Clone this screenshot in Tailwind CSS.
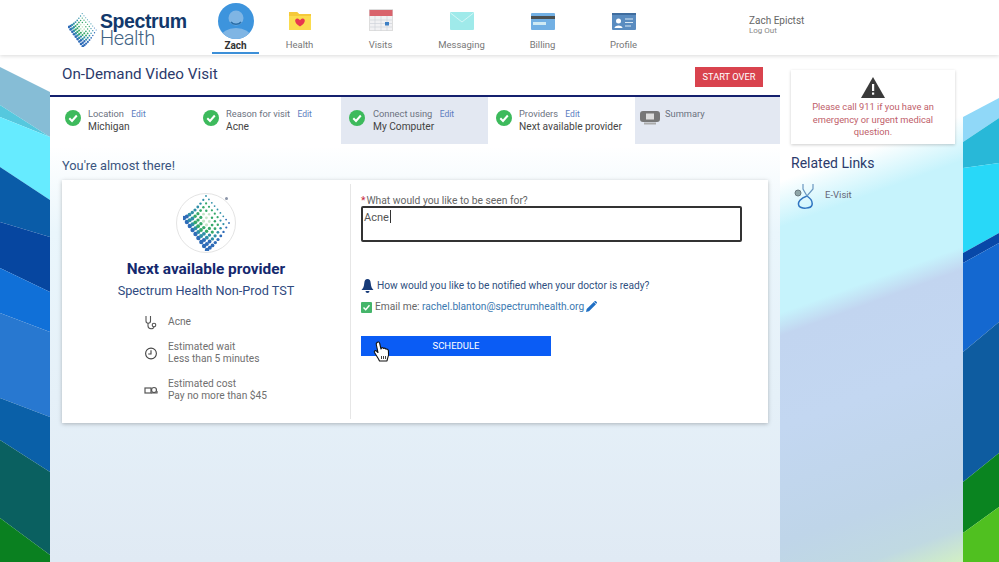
<!DOCTYPE html>
<html lang="en">
<head>
    <meta charset="UTF-8">
    <title>On-Demand Video Visit</title>
    <script src="https://cdn.jsdelivr.net/npm/@tailwindcss/browser@4"></script>
</head>
<body class="relative h-[562px] w-[999px] overflow-hidden bg-white font-['Roboto',sans-serif]">

<!-- Header -->
<header class="relative z-10 flex h-[55px] bg-white shadow-[0_1px_4px_rgba(0,0,0,0.15)]">
    <div class="flex w-[212px] shrink-0 items-start pl-[68px] pt-[12px]">
        <svg data-mesh="1" class="mt-px h-[34px] w-[29px]" viewBox="0 0 47 56"></svg>
        <div class="ml-[3px] mt-0">
            <div class="h-[18px] whitespace-nowrap font-['Liberation_Sans',sans-serif] text-[19.5px] font-bold leading-[18px] tracking-[-0.4px] text-[#12386b]">Spectrum</div>
            <div class="h-[17px] whitespace-nowrap text-[20px] font-light leading-[17px] tracking-[-0.4px] text-[#3f6283]">Health</div>
        </div>
    </div>
    <nav class="flex text-center text-[9.5px] text-[#777]">
        <a href="#" class="relative flex h-[55px] w-[47px] flex-col items-center pt-[3px]">
            <svg class="h-[36px] w-[36px] shrink-0" viewBox="0 0 36 36">
                <circle cx="18" cy="18" r="18" fill="#3d94dd"/>
                <clipPath id="av"><circle cx="18" cy="18" r="18"/></clipPath>
                <g clip-path="url(#av)">
                    <ellipse cx="18" cy="34" rx="15" ry="9" fill="#7fb5e4"/>
                    <circle cx="18" cy="15" r="7.5" fill="#7fb5e4"/>
                    <path d="M13 19c2 3 8 3 10 0" fill="none" stroke="#2a6ea8" stroke-width="1.6"/>
                </g>
            </svg>
            <span class="mt-[1px] whitespace-nowrap text-[10px] font-bold leading-[12px] text-[#333]">Zach</span>
            <span class="absolute bottom-[1px] left-0 h-[2px] w-[47px] bg-[#3c8fd8]"></span>
        </a>
        <a href="#" class="flex w-[81px] flex-col items-center pt-[11px]">
            <svg class="h-[20px] w-[24px]" viewBox="0 0 24 20">
                <path d="M1 1h8l2 2h12v16H1z" fill="#fbdc4e"/>
                <path d="M1 1h8l2 2h12v2H1z" fill="#f5c93a"/>
                <path d="M12 15.5c-7-4-5-8.500-2.500-8 1.200.2 2 1 2.500 1.800.5-.8 1.300-1.600 2.500-1.800 2.500-.5 4.500 4-2.500 8z" fill="#e8384f"/>
            </svg>
            <span class="mt-[8px] leading-[12px]">Health</span>
        </a>
        <a href="#" class="flex w-[81px] flex-col items-center pt-[9px]">
            <svg class="h-[22px] w-[24px]" viewBox="0 0 24 22">
                <rect x="0.500" y="0.500" width="23" height="21" fill="#f1f1f3" stroke="#ddd"/>
                <rect x="0.500" y="1" width="23" height="6" fill="#d9636c"/>
                <path d="M1 11h22M1 14.500h22M1 18h22M6 7v15M12 7v15M18 7v15" stroke="#cfd3da" stroke-width="0.700"/>
                <rect x="16" y="13" width="4" height="3.500" fill="#3d7fc4"/>
            </svg>
            <span class="mt-[8px] leading-[12px]">Visits</span>
        </a>
        <a href="#" class="flex w-[81px] flex-col items-center pt-[12px]">
            <svg class="h-[18px] w-[24px]" viewBox="0 0 24 18">
                <rect width="24" height="18" rx="1" fill="#9feaea"/>
                <path d="M0.500 1 12 10 23.500 1" fill="none" stroke="#d4f6f6" stroke-width="1"/>
            </svg>
            <span class="mt-[9px] leading-[12px]">Messaging</span>
        </a>
        <a href="#" class="flex w-[81px] flex-col items-center pt-[13px]">
            <svg class="h-[17px] w-[24px]" viewBox="0 0 24 17">
                <rect width="24" height="17" rx="1" fill="#72b0e4"/>
                <rect y="3" width="24" height="3" fill="#4a4f50"/>
                <rect x="2" y="9" width="13" height="3" fill="#cfeaf4"/>
            </svg>
            <span class="mt-[9px] leading-[12px]">Billing</span>
        </a>
        <a href="#" class="flex w-[81px] flex-col items-center pt-[13px]">
            <svg class="h-[17px] w-[24px]" viewBox="0 0 24 17">
                <rect width="24" height="17" rx="1" fill="#5a8cc0"/>
                <rect y="0" width="24" height="2" fill="#3f6d9f"/>
                <circle cx="6.500" cy="8" r="2.500" fill="#fff"/>
                <path d="M2.500 15c0-3.500 8-3.500 8 0z" fill="#fff"/>
                <path d="M13 6h8M13 9.500h8M13 13h6" stroke="#d8e8f4" stroke-width="1.200"/>
            </svg>
            <span class="mt-[9px] leading-[12px]">Profile</span>
        </a>
    </nav>
    <div class="ml-[85px] pt-[15px] text-[#666]">
        <div class="whitespace-nowrap text-[10px] leading-[12px]">Zach Epictst</div>
        <a href="#" class="block text-[8px] leading-[8px] text-[#888]">Log Out</a>
    </div>
</header>

<div class="flex h-[507px]">
    <!-- Left stripes -->
    <svg class="w-[50px] shrink-0" viewBox="0 55 50 507">
        <path d="M0 67 50 92V137L0 105z" fill="#86bdd6"/>
        <path d="M0 105 50 137 0 117z" fill="#55c8de"/>
        <path d="M0 117 50 137V200L0 167z" fill="#66ebff"/>
        <path d="M0 167 50 200V237L0 222z" fill="#0a5ca8"/>
        <path d="M0 222 50 237V292L0 268z" fill="#0646a0"/>
        <path d="M0 268 50 292V332L0 313z" fill="#1070d8"/>
        <path d="M0 313 50 332V417L0 398z" fill="#2878d0"/>
        <path d="M0 398 50 417V472L0 440z" fill="#0a60a8"/>
        <path d="M0 440 50 472V555L0 518z" fill="#0a6060"/>
        <path d="M0 518 50 555V562H0z" fill="#0a8020"/>
    </svg>

    <!-- Centre column -->
    <main class="w-[730px] shrink-0 bg-linear-to-b from-white from-[18%] via-[#eaf6fc] via-[35%] to-[#e0eaf4]">
        <div class="flex h-[40px] items-start justify-between pl-[12px] pr-[17px] pt-[12px]">
            <h1 class="text-[15.2px] leading-[14px] text-[#2b3a6b]">On-Demand Video Visit</h1>
            <button class="h-[20px] w-[68px] bg-[#d9434e] text-[9.3px] text-white">START OVER</button>
        </div>
        <div class="h-[2px] bg-[#14206e]"></div>

        <!-- Steps -->
        <div class="grid h-[47px] grid-cols-[145px_146px_147px_147px_145px]">
            <div class="flex bg-white pl-[15px] pt-[13px]">
                <svg class="h-[16px] w-[16px] shrink-0" viewBox="0 0 16 16"><circle cx="8" cy="8" r="8" fill="#3dba5c"/><path d="M4.300 8.300 7 11l4.800-5.500" fill="none" stroke="#fff" stroke-width="2"/></svg>
                <div class="ml-[7px] mt-[-2px]">
                    <div class="text-[9.3px] leading-[12px] text-[#6b7280]">Location <a href="#" class="ml-[5px] text-[8.5px] text-[#5b7cc0]">Edit</a></div>
                    <div class="text-[10.2px] leading-[13px] text-[#444]">Michigan</div>
                </div>
            </div>
            <div class="flex bg-white pl-[8px] pt-[13px]">
                <svg class="h-[16px] w-[16px] shrink-0" viewBox="0 0 16 16"><circle cx="8" cy="8" r="8" fill="#3dba5c"/><path d="M4.300 8.300 7 11l4.800-5.500" fill="none" stroke="#fff" stroke-width="2"/></svg>
                <div class="ml-[7px] mt-[-2px]">
                    <div class="text-[9.3px] leading-[12px] text-[#6b7280]">Reason for visit <a href="#" class="ml-[5px] text-[8.5px] text-[#5b7cc0]">Edit</a></div>
                    <div class="text-[10.2px] leading-[13px] text-[#444]">Acne</div>
                </div>
            </div>
            <div class="flex bg-[#e3e8f2] pl-[8px] pt-[13px]">
                <svg class="h-[16px] w-[16px] shrink-0" viewBox="0 0 16 16"><circle cx="8" cy="8" r="8" fill="#3dba5c"/><path d="M4.300 8.300 7 11l4.800-5.500" fill="none" stroke="#fff" stroke-width="2"/></svg>
                <div class="ml-[8px] mt-[-2px]">
                    <div class="text-[9.3px] leading-[12px] text-[#6b7280]">Connect using <a href="#" class="ml-[5px] text-[8.5px] text-[#5b7cc0]">Edit</a></div>
                    <div class="text-[10.2px] leading-[13px] text-[#444]">My Computer</div>
                </div>
            </div>
            <div class="flex bg-white pl-[8px] pt-[13px]">
                <svg class="h-[16px] w-[16px] shrink-0" viewBox="0 0 16 16"><circle cx="8" cy="8" r="8" fill="#3dba5c"/><path d="M4.300 8.300 7 11l4.800-5.500" fill="none" stroke="#fff" stroke-width="2"/></svg>
                <div class="ml-[7px] mt-[-2px]">
                    <div class="text-[9.3px] leading-[12px] text-[#6b7280]">Providers <a href="#" class="ml-[5px] text-[8.5px] text-[#5b7cc0]">Edit</a></div>
                    <div class="whitespace-nowrap text-[10.2px] leading-[13px] text-[#444]">Next available provider</div>
                </div>
            </div>
            <div class="flex bg-[#e3e8f2] pl-[5px] pt-[13px]">
                <svg class="mt-[1px] h-[14px] w-[20px] shrink-0" viewBox="0 0 20 14">
                    <rect width="20" height="11" rx="3" fill="#777"/>
                    <rect x="6" y="2.500" width="8" height="6" fill="#ddd"/>
                    <rect x="4" y="11.500" width="12" height="2" fill="#aaa"/>
                </svg>
                <div class="ml-[5px] mt-[-2px] text-[9.3px] leading-[12px] text-[#6b7280]">Summary</div>
            </div>
        </div>

        <h2 class="ml-[12px] mt-[15px] text-[12.8px] leading-[14px] text-[#3a5580]">You're almost there!</h2>

        <!-- Card -->
        <div class="relative ml-[12px] mt-[7px] flex h-[243px] w-[706px] bg-white shadow-[0_1px_4px_rgba(0,0,0,0.25)]">
            <section class="flex w-[288px] shrink-0 flex-col items-center pt-[13px]">
                <div class="relative flex h-[60px] w-[60px] items-center justify-center rounded-full border border-[#e4e4e4]">
                    <svg data-mesh="1" class="h-[56px] w-[47px]" viewBox="0 0 47 56"></svg>
                    <span class="absolute right-[7px] top-[3px] h-[3px] w-[3px] rounded-full bg-[#8a94a8]"></span>
                </div>
                <h3 class="mt-[7px] whitespace-nowrap text-[15.4px] font-bold leading-[18px] text-[#14286e]">Next available provider</h3>
                <p class="mt-[6px] whitespace-nowrap text-[12.7px] leading-[14px] text-[#2f4a80]">Spectrum Health Non-Prod TST</p>
                <ul class="mt-[17px] w-full pl-[82px] text-[10.2px] leading-[12px] text-[#6f6f6f]">
                    <li class="flex h-[14px] items-center">
                        <svg class="ml-[1px] h-[15px] w-[13px] shrink-0" viewBox="0 0 13 15" fill="none" stroke="#555" stroke-width="1.100"><path d="M1 1v5c0 3 4.500 3 4.500 0V1"/><path d="M3 8v3c0 3.500 6 3.500 6 .5"/><circle cx="9" cy="10" r="1.800"/></svg>
                        <span class="ml-[10px]">Acne</span>
                    </li>
                    <li class="mt-[12px] flex items-center">
                        <svg class="h-[13px] w-[14px] shrink-0" viewBox="0 0 14 14" fill="none" stroke="#444" stroke-width="1.200"><circle cx="7" cy="7" r="5.800"/><path d="M7 3.500V7.500H4"/></svg>
                        <span class="ml-[10px]">Estimated wait<br>Less than 5 minutes</span>
                    </li>
                    <li class="mt-[13px] flex items-center">
                        <svg class="h-[9px] w-[14px] shrink-0" viewBox="0 0 14 9" fill="none" stroke="#555" stroke-width="1.200"><rect x="1" y="2" width="6" height="5"/><circle cx="10" cy="4" r="2.500"/><path d="M7 7h6V5"/></svg>
                        <span class="ml-[10px]">Estimated cost<br>Pay no more than $45</span>
                    </li>
                </ul>
            </section>
            <div class="my-[4px] w-px bg-[#e6e6e6]"></div>
            <section class="pl-[10px] pt-[15px]">
                <label class="block h-[11px] text-[10.3px] leading-[11px] text-[#666]"><span class="mr-px text-[#c8283c]">*</span>What would you like to be seen for?</label>
                <div class="h-[36px] w-[381px] rounded-[2px] border-2 border-[#333] pl-[1px] text-[11px] leading-[16px] text-[#555]">Acne<span class="ml-px inline-block h-[13px] w-px translate-y-[2px] bg-[#333]"></span></div>
                <div class="mt-[37px] flex items-center text-[10.2px] leading-[12px] text-[#2f5080]">
                    <svg class="mr-[3px] h-[14px] w-[13px]" viewBox="0 0 13 14"><path d="M6.500 0C4.500 0 3.500 1.500 3.300 4 3 8 2 9.500.5 11h12C11 9.500 10 8 9.700 4 9.500 1.500 8.500 0 6.500 0z" fill="#163a78"/><path d="M4.500 12h4a2 2 0 0 1-4 0z" fill="#163a78"/></svg>
                    How would you like to be notified when your doctor is ready?
                </div>
                <div class="mt-[8px] flex items-center text-[10.2px] leading-[12px] text-[#666]">
                    <svg class="mr-[3px] h-[11px] w-[11px]" viewBox="0 0 11 11"><rect width="11" height="11" rx="1" fill="#45b56a"/><path d="M2.500 5.500 4.700 7.700 8.500 3.300" fill="none" stroke="#fff" stroke-width="1.500"/></svg>
                    Email me:&nbsp;<a href="#" class="text-[#3b79b0]">rachel.blanton@spectrumhealth.org</a>
                    <svg class="ml-[2px] h-[11px] w-[11px] -translate-y-[1px]" viewBox="0 0 11 11"><path d="M0 11 .7 8 7.800 1 10 3.200 3 10.300zM8.500.3c.4-.4 1-.4 1.400 0l.8.8c.4.400.4 1 0 1.400l-.4.300L8.100.7z" fill="#1f6fc4"/></svg>
                </div>
                <button class="mt-[23px] h-[20px] w-[190px] bg-[#0a5cf5] pt-px text-[9.5px] text-white">SCHEDULE</button>
            </section>
            <!-- Mouse pointer over the button -->
            <svg class="absolute left-[311px] top-[161px] h-[22px] w-[18px]" viewBox="0 0 18 22">
                <path d="M4 1.500c1-1 2.500-.5 2.700 1L8 8l.5-1c1-.8 2-.3 2.200.5 1-.7 2-.2 2.200.7 1-.5 2.200 0 2.500 1.500.5 3 .3 5.500-.9 8l-.5 2.300H6.500L5.500 18 1.500 11.500c-.7-1.500 1-2.500 2-1.500l1.500 1.500L3.300 3.500C3 2.500 3.400 2 4 1.500z" fill="#fff" stroke="#111" stroke-width="1.100" stroke-linejoin="round"/>
                <path d="M8.500 15v3M10.500 15v3M12.500 15v3" stroke="#111" stroke-width="0.800"/>
            </svg>
        </div>
    </main>

    <!-- Sidebar -->
    <aside class="w-[183px] shrink-0 bg-[linear-gradient(160deg,#fff_0%,#fff_22%,#c6f3fc_30%,#c6f3fc_45%,#c2d5f0_49%,#c3d7f1_65%,#bfd5e9_85%,#c0d9e2_94%,#d2f0c4_100%)] pl-[11px] pt-[15px]">
        <div class="flex h-[74px] w-[164px] flex-col items-center bg-white pt-[7px] shadow-[0_1px_3px_rgba(0,0,0,0.2)]">
            <svg class="h-[21px] w-[24px] shrink-0" viewBox="0 0 24 21"><path d="M12 0 24 21H0z" fill="#3a3a3a"/><rect x="11" y="7" width="2.200" height="7" fill="#fff"/><rect x="11" y="15.500" width="2.200" height="2.200" fill="#fff"/></svg>
            <p class="mt-[3px] text-center text-[9.3px] leading-[12.5px] text-[#c0606a]">Please call 911 if you have an<br>emergency or urgent medical<br>question.</p>
        </div>
        <h2 class="mt-[11px] text-[14px] leading-[17px] text-[#2b3a6b]">Related Links</h2>
        <a href="#" class="ml-[3px] mt-[10px] flex items-center">
            <svg class="h-[27px] w-[22px] shrink-0" viewBox="0 0 22 27" fill="none" stroke="#2f74c0" stroke-width="1.500">
                <path d="M13 14C7 16 3 20 5 24c2 3 12 3 13-1 1-4-2-7-5-9z"/>
                <path d="M9 2v5l4 7 6-7V2" stroke="#6a97c0" stroke-width="1.200"/>
                <circle cx="4" cy="11" r="3" fill="#8fa6a8" stroke="#6a7a80" stroke-width="1"/>
            </svg>
            <span class="ml-[9px] text-[9.5px] text-[#667]">E-Visit</span>
        </a>
    </aside>

    <!-- Right stripes -->
    <svg class="w-[36px] shrink-0" viewBox="963 55 36 507">
        <rect x="963" y="55" width="36" height="507" fill="#fff"/>
        <path d="M963 117 999 98V118L963 142z" fill="#90d8f8"/>
        <path d="M963 142 999 118V163L963 168z" fill="#28b8d8"/>
        <path d="M963 168 999 163V233L963 253z" fill="#28d8f8"/>
        <path d="M963 253 999 233V243L963 263z" fill="#0848a8"/>
        <path d="M963 263 999 243V322L963 352z" fill="#1468d0"/>
        <path d="M963 352 999 322V453L963 482z" fill="#0e5ca0"/>
        <path d="M963 482 999 453V507L963 533z" fill="#0a8420"/>
        <path d="M963 533 999 507V562H963z" fill="#50c020"/>
    </svg>
</div>

<script>
    // logo mesh: warped grid of dots, used in the header and the provider circle
    document.querySelectorAll("svg[data-mesh]").forEach((svg) => {
        const n = 9;
        let dots = "";
        for (let i = 0; i < n; i++) {
            for (let j = 0; j < n; j++) {
                const u = i / (n - 1), v = j / (n - 1);
                const x = (1 - u) * (1 - v) * 1 + u * (1 - v) * 23 + (1 - u) * v * 24 + u * v * 46;
                const y = (1 - u) * (1 - v) * 23 + u * (1 - v) * 1 + (1 - u) * v * 55 + u * v * 28 + Math.sin(u * Math.PI) * 3;
                const d = Math.hypot(u - 0.6, v - 0.4);
                const fill = d < 0.18 ? "#c4e6c8" : d < 0.4 ? "#35a86a" : d < 0.58 ? "#2f8fa8" : "#2f6cb8";
                const r = 0.9 + 1.3 * (1 - u);
                dots += `<circle cx="${x.toFixed(1)}" cy="${y.toFixed(1)}" r="${r.toFixed(1)}" fill="${fill}"/>`;
            }
        }
        svg.innerHTML = dots;
    });
</script>
</body>
</html>
